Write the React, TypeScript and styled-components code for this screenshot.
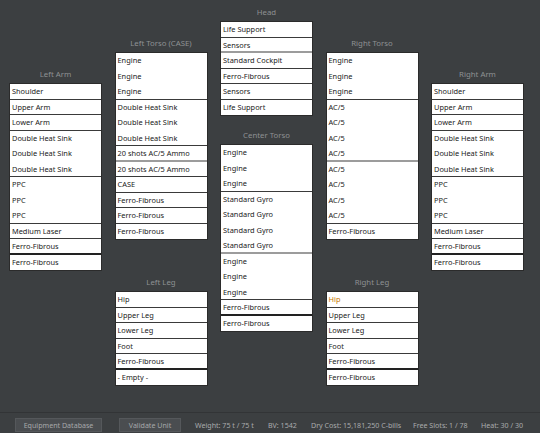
import React from 'react';
import styled, { createGlobalStyle } from 'styled-components';

const GlobalStyle = createGlobalStyle`
  html, body {
    margin: 0;
    padding: 0;
    background: #3c3f41;
  }
  body {
    font-family: 'Noto Sans', 'Open Sans', sans-serif;
    -webkit-font-smoothing: antialiased;
  }
`;

type Sep = 'none' | 'line' | 'grey' | 'heavy';

interface Slot {
  name: string;
  sep?: Sep; // separator below this slot
  accent?: boolean;
}

interface Location {
  title: string;
  slots: Slot[];
}

const Page = styled.div`
  width: 540px;
  height: 433px;
  display: flex;
  flex-direction: column;
  overflow: hidden;
`;

const Board = styled.div`
  flex: 1;
  display: grid;
  grid-template-columns: repeat(5, 93px);
  column-gap: 12.5px;
  padding-left: 9px;
`;

const Column = styled.div<{ $top: number }>`
  display: flex;
  flex-direction: column;
  padding-top: ${({ $top }) => $top}px;
`;

const Spacer = styled.div<{ $h: number }>`
  height: ${({ $h }) => $h}px;
`;

const LocTitle = styled.div`
  height: 18px;
  line-height: 18px;
  text-align: center;
  font-size: 7.8px;
  color: #8e9193;
`;

const SlotBox = styled.div`
  background: #ffffff;
  border: 1px solid #2b2b2b;
  display: flex;
  flex-direction: column;
`;

const sepColor: Record<Sep, string> = {
  none: 'transparent',
  line: '#3a3a3a',
  grey: '#9c9c9c',
  heavy: '#222222',
};

const sepWidth: Record<Sep, number> = {
  none: 0,
  line: 1,
  grey: 2,
  heavy: 2,
};

const SlotRow = styled.div<{ $sep: Sep; $accent?: boolean }>`
  box-sizing: border-box;
  height: 15.5px;
  line-height: 14px;
  padding-left: 2px;
  font-size: 7.4px;
  color: ${({ $accent }) => ($accent ? '#c67600' : '#1a1a1a')};
  white-space: nowrap;
  overflow: hidden;
  border-bottom: ${({ $sep }) => `${sepWidth[$sep]}px solid ${sepColor[$sep]}`};
`;

const StatusBar = styled.div`
  height: 20px;
  border-top: 1px solid #323436;
  display: flex;
  align-items: center;
  padding-left: 15px;
  font-size: 7.1px;
  color: #a9abad;
  white-space: nowrap;
`;

const BarButton = styled.div<{ $w: number; $gap: number }>`
  width: ${({ $w }) => $w}px;
  height: 14px;
  margin-right: ${({ $gap }) => $gap}px;
  margin-top: 4px;
  background: #4a4d50;
  border: 1px solid #55585b;
  box-sizing: border-box;
  display: flex;
  align-items: center;
  justify-content: center;
  color: #a6a8aa;
`;

const Stat = styled.span<{ $w: number }>`
  flex: 0 0 ${({ $w }) => $w}px;
  margin-top: 4px;
`;

const s = (name: string, sep: Sep = 'line', accent = false): Slot => ({ name, sep, accent });

const armSlots = (): Slot[] => [
  s('Shoulder'),
  s('Upper Arm'),
  s('Lower Arm'),
  s('Double Heat Sink', 'none'),
  s('Double Heat Sink', 'none'),
  s('Double Heat Sink'),
  s('PPC', 'none'),
  s('PPC', 'none'),
  s('PPC'),
  s('Medium Laser'),
  s('Ferro-Fibrous', 'heavy'),
  s('Ferro-Fibrous', 'none'),
];

const head: Location = {
  title: 'Head',
  slots: [
    s('Life Support'),
    s('Sensors', 'grey'),
    s('Standard Cockpit'),
    s('Ferro-Fibrous'),
    s('Sensors'),
    s('Life Support', 'none'),
  ],
};

const leftTorso: Location = {
  title: 'Left Torso (CASE)',
  slots: [
    s('Engine', 'none'),
    s('Engine', 'none'),
    s('Engine'),
    s('Double Heat Sink', 'none'),
    s('Double Heat Sink', 'none'),
    s('Double Heat Sink'),
    s('20 shots AC/5 Ammo', 'grey'),
    s('20 shots AC/5 Ammo'),
    s('CASE'),
    s('Ferro-Fibrous'),
    s('Ferro-Fibrous'),
    s('Ferro-Fibrous', 'none'),
  ],
};

const centerTorso: Location = {
  title: 'Center Torso',
  slots: [
    s('Engine', 'none'),
    s('Engine', 'none'),
    s('Engine'),
    s('Standard Gyro', 'none'),
    s('Standard Gyro', 'none'),
    s('Standard Gyro', 'none'),
    s('Standard Gyro', 'grey'),
    s('Engine', 'none'),
    s('Engine', 'none'),
    s('Engine'),
    s('Ferro-Fibrous', 'heavy'),
    s('Ferro-Fibrous', 'none'),
  ],
};

const rightTorso: Location = {
  title: 'Right Torso',
  slots: [
    s('Engine', 'none'),
    s('Engine', 'none'),
    s('Engine'),
    s('AC/5', 'none'),
    s('AC/5', 'none'),
    s('AC/5', 'none'),
    s('AC/5', 'grey'),
    s('AC/5', 'none'),
    s('AC/5', 'none'),
    s('AC/5', 'none'),
    s('AC/5'),
    s('Ferro-Fibrous', 'none'),
  ],
};

const legSlots = (last: string, accentHip: boolean): Slot[] => [
  s('Hip', 'line', accentHip),
  s('Upper Leg'),
  s('Lower Leg'),
  s('Foot'),
  s('Ferro-Fibrous', 'heavy'),
  s(last, 'none'),
];

const LocationView: React.FC<{ loc: Location }> = ({ loc }) => (
  <div>
    <LocTitle>{loc.title}</LocTitle>
    <SlotBox>
      {loc.slots.map((slot, i) => (
        <SlotRow key={i} $sep={slot.sep ?? 'line'} $accent={slot.accent}>
          {slot.name}
        </SlotRow>
      ))}
    </SlotBox>
  </div>
);

export default function App() {
  return (
    <Page>
      <GlobalStyle />
      <Board>
        <Column $top={65}>
          <LocationView loc={{ title: 'Left Arm', slots: armSlots() }} />
        </Column>
        <Column $top={34}>
          <LocationView loc={leftTorso} />
          <Spacer $h={33} />
          <LocationView loc={{ title: 'Left Leg', slots: legSlots('- Empty -', false) }} />
        </Column>
        <Column $top={3}>
          <LocationView loc={head} />
          <Spacer $h={10} />
          <LocationView loc={centerTorso} />
        </Column>
        <Column $top={34}>
          <LocationView loc={rightTorso} />
          <Spacer $h={33} />
          <LocationView loc={{ title: 'Right Leg', slots: legSlots('Ferro-Fibrous', true) }} />
        </Column>
        <Column $top={65}>
          <LocationView loc={{ title: 'Right Arm', slots: armSlots() }} />
        </Column>
      </Board>
      <StatusBar>
        <BarButton $w={87} $gap={17}>Equipment Database</BarButton>
        <BarButton $w={62} $gap={14}>Validate Unit</BarButton>
        <Stat $w={73}>Weight: 75 t / 75 t</Stat>
        <Stat $w={43}>BV: 1542</Stat>
        <Stat $w={102}>Dry Cost: 15,181,250 C-bills</Stat>
        <Stat $w={68}>Free Slots: 1 / 78</Stat>
        <Stat $w={50}>Heat: 30 / 30</Stat>
      </StatusBar>
    </Page>
  );
}
